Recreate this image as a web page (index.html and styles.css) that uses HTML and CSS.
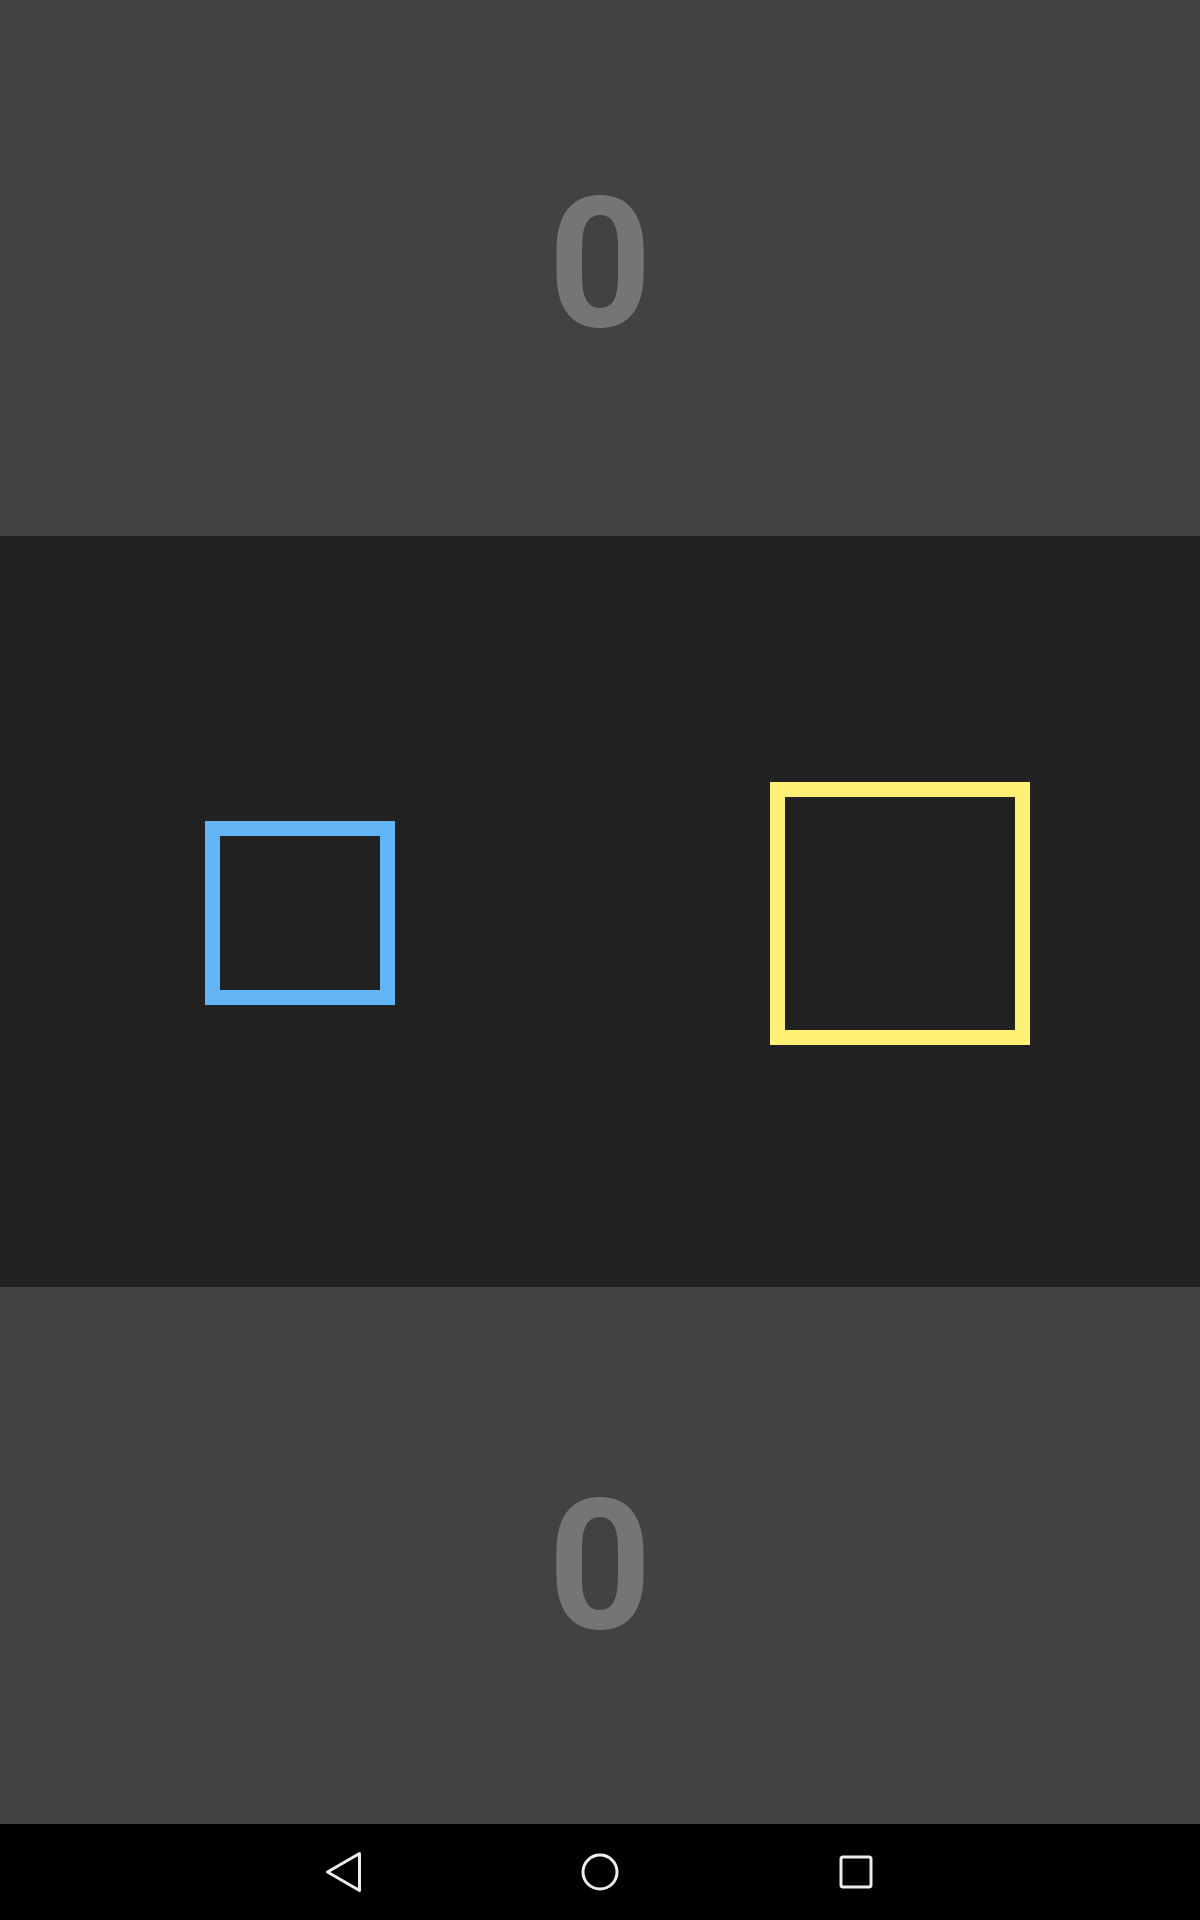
FILE: index.html
```
<!DOCTYPE html>
<html>
<head>
<meta charset="utf-8">
<link rel="stylesheet" href="styles.css">
</head>
<body>
<div class="screen">
  <div class="score score-top"><span class="score-num">0</span></div>
  <div class="board">
    <div class="half"><div class="box box-blue"></div></div>
    <div class="half"><div class="box box-yellow"></div></div>
  </div>
  <div class="score score-bottom"><span class="score-num">0</span></div>
  <div class="navbar">
    <svg class="nav-icon" width="40" height="40" viewBox="0 0 40 40"><path d="M35.5 1.5 L3.5 20 L35.5 38.5 Z" fill="none" stroke="#eeeeee" stroke-width="3" stroke-linejoin="round"/></svg>
    <svg class="nav-icon" width="40" height="40" viewBox="0 0 40 40"><circle cx="20" cy="20" r="17" fill="none" stroke="#eeeeee" stroke-width="3"/></svg>
    <svg class="nav-icon" width="40" height="40" viewBox="0 0 40 40"><rect x="5" y="5" width="30" height="30" rx="2" fill="none" stroke="#eeeeee" stroke-width="3"/></svg>
  </div>
</div>
</body>
</html>
```
FILE: styles.css
```
html, body {
  margin: 0;
  padding: 0;
  background: #000;
}
.screen {
  width: 1200px;
  height: 1920px;
  display: flex;
  flex-direction: column;
  font-family: Roboto, "Noto Sans", sans-serif;
}
.score {
  background: #424242;
  text-align: center;
  box-sizing: border-box;
  padding-top: 173px;
}
.score-top {
  height: 536px;
  transform: rotate(180deg);
  padding-top: 171px;
}
.score-bottom {
  height: 537px;
}
.score-num {
  font-size: 181px;
  font-weight: 700;
  color: #757575;
  line-height: normal;
}
.board {
  height: 751px;
  box-sizing: border-box;
  padding-top: 3px;
  background: #212121;
  display: flex;
}
.half {
  flex: 1;
  display: flex;
  align-items: center;
  justify-content: center;
}
.box {
  box-sizing: border-box;
  border: 15px solid;
}
.box-blue {
  width: 190px;
  height: 184px;
  border-color: #64b5f6;
}
.box-yellow {
  width: 260px;
  height: 263px;
  border-color: #fff176;
}
.navbar {
  height: 96px;
  background: #000;
  display: flex;
  align-items: center;
  justify-content: center;
  gap: 216px;
}
.nav-icon {
  display: block;
}
```
